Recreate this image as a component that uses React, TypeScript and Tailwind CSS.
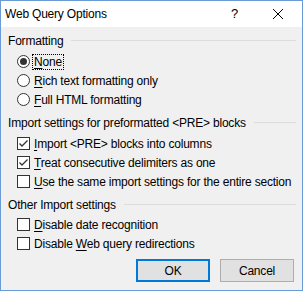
const font = { fontFamily: '"Segoe UI", "Liberation Sans", sans-serif' };

const Radio = ({ checked }: { checked?: boolean }) => (
  <span className="flex h-[13px] w-[13px] shrink-0 items-center justify-center rounded-full border border-[#333] bg-white">
    {checked && <span className="h-[7px] w-[7px] rounded-full bg-[#333]" />}
  </span>
);

const Check = ({ checked }: { checked?: boolean }) => (
  <span className="flex h-[13px] w-[13px] shrink-0 items-center justify-center border border-[#333] bg-white">
    {checked && (
      <svg width="11" height="11" viewBox="0 0 11 11">
        <path d="M1.5 5.5 L4 8 L9.5 2.5" fill="none" stroke="#333" strokeWidth="1.3" />
      </svg>
    )}
  </span>
);

const Group = ({ title }: { title: string }) => (
  <div className="flex h-[19px] items-center gap-2 whitespace-nowrap pl-[7px] pr-[6px]">
    <span>{title}</span>
    <span className="h-px flex-1 bg-[#dcdcdc]" />
  </div>
);

const Row = ({ children, label, u, rest, focus }: { children: React.ReactNode; label?: string; u: string; rest: string; focus?: boolean }) => (
  <div className="flex h-[19px] items-center gap-[4px] whitespace-nowrap pl-[16px]">
    {children}
    <span className={focus ? "-mx-[1px] px-[1px] leading-[14px] outline outline-1 outline-dotted outline-[#000]" : ""}>
      {label}
      <span className="underline underline-offset-2">{u}</span>
      {rest}
    </span>
  </div>
);

export default function App() {
  return (
    <div
      className="h-[291px] w-[303px] border border-[#6a9bd6] bg-[#f0f0f0] text-[12px] tracking-[-0.2px] text-black"
      style={font}
    >
      <div className="flex h-[26px] items-center bg-white pl-[4px]">
        <span className="flex-1">Web Query Options</span>
        <span className="w-[41px] text-[13px]">?</span>
        <svg width="12" height="12" viewBox="0 0 12 12" className="mr-[18px]">
          <path d="M1 1 L11 11 M11 1 L1 11" stroke="#000" strokeWidth="1" />
        </svg>
      </div>
      <div className="pt-[4px]">
        <Group title="Formatting" />
        <div className="pt-[2px]">
          <Row u="N" rest="one" focus>
            <Radio checked />
          </Row>
          <Row u="R" rest="ich text formatting only">
            <Radio />
          </Row>
          <Row u="F" rest="ull HTML formatting">
            <Radio />
          </Row>
        </div>
        <div className="pt-[4px]">
          <Group title="Import settings for preformatted <PRE> blocks" />
        </div>
        <div className="pt-[2px]">
          <Row u="I" rest="mport <PRE> blocks into columns">
            <Check checked />
          </Row>
          <Row u="T" rest="reat consecutive delimiters as one">
            <Check checked />
          </Row>
          <Row u="U" rest="se the same import settings for the entire section">
            <Check />
          </Row>
        </div>
        <div className="pt-[4px]">
          <Group title="Other Import settings" />
        </div>
        <div className="pt-[1px]">
          <Row u="D" rest="isable date recognition">
            <Check />
          </Row>
          <Row label="Disable " u="W" rest="eb query redirections">
            <Check />
          </Row>
        </div>
        <div className="flex justify-end gap-[10px] pr-[8px] pt-[6px]">
          <button className="h-[23px] w-[74px] border-2 border-[#0078d7] bg-[#e1e1e1]">OK</button>
          <button className="h-[23px] w-[74px] border border-[#adadad] bg-[#e1e1e1]">Cancel</button>
        </div>
      </div>
    </div>
  );
}
